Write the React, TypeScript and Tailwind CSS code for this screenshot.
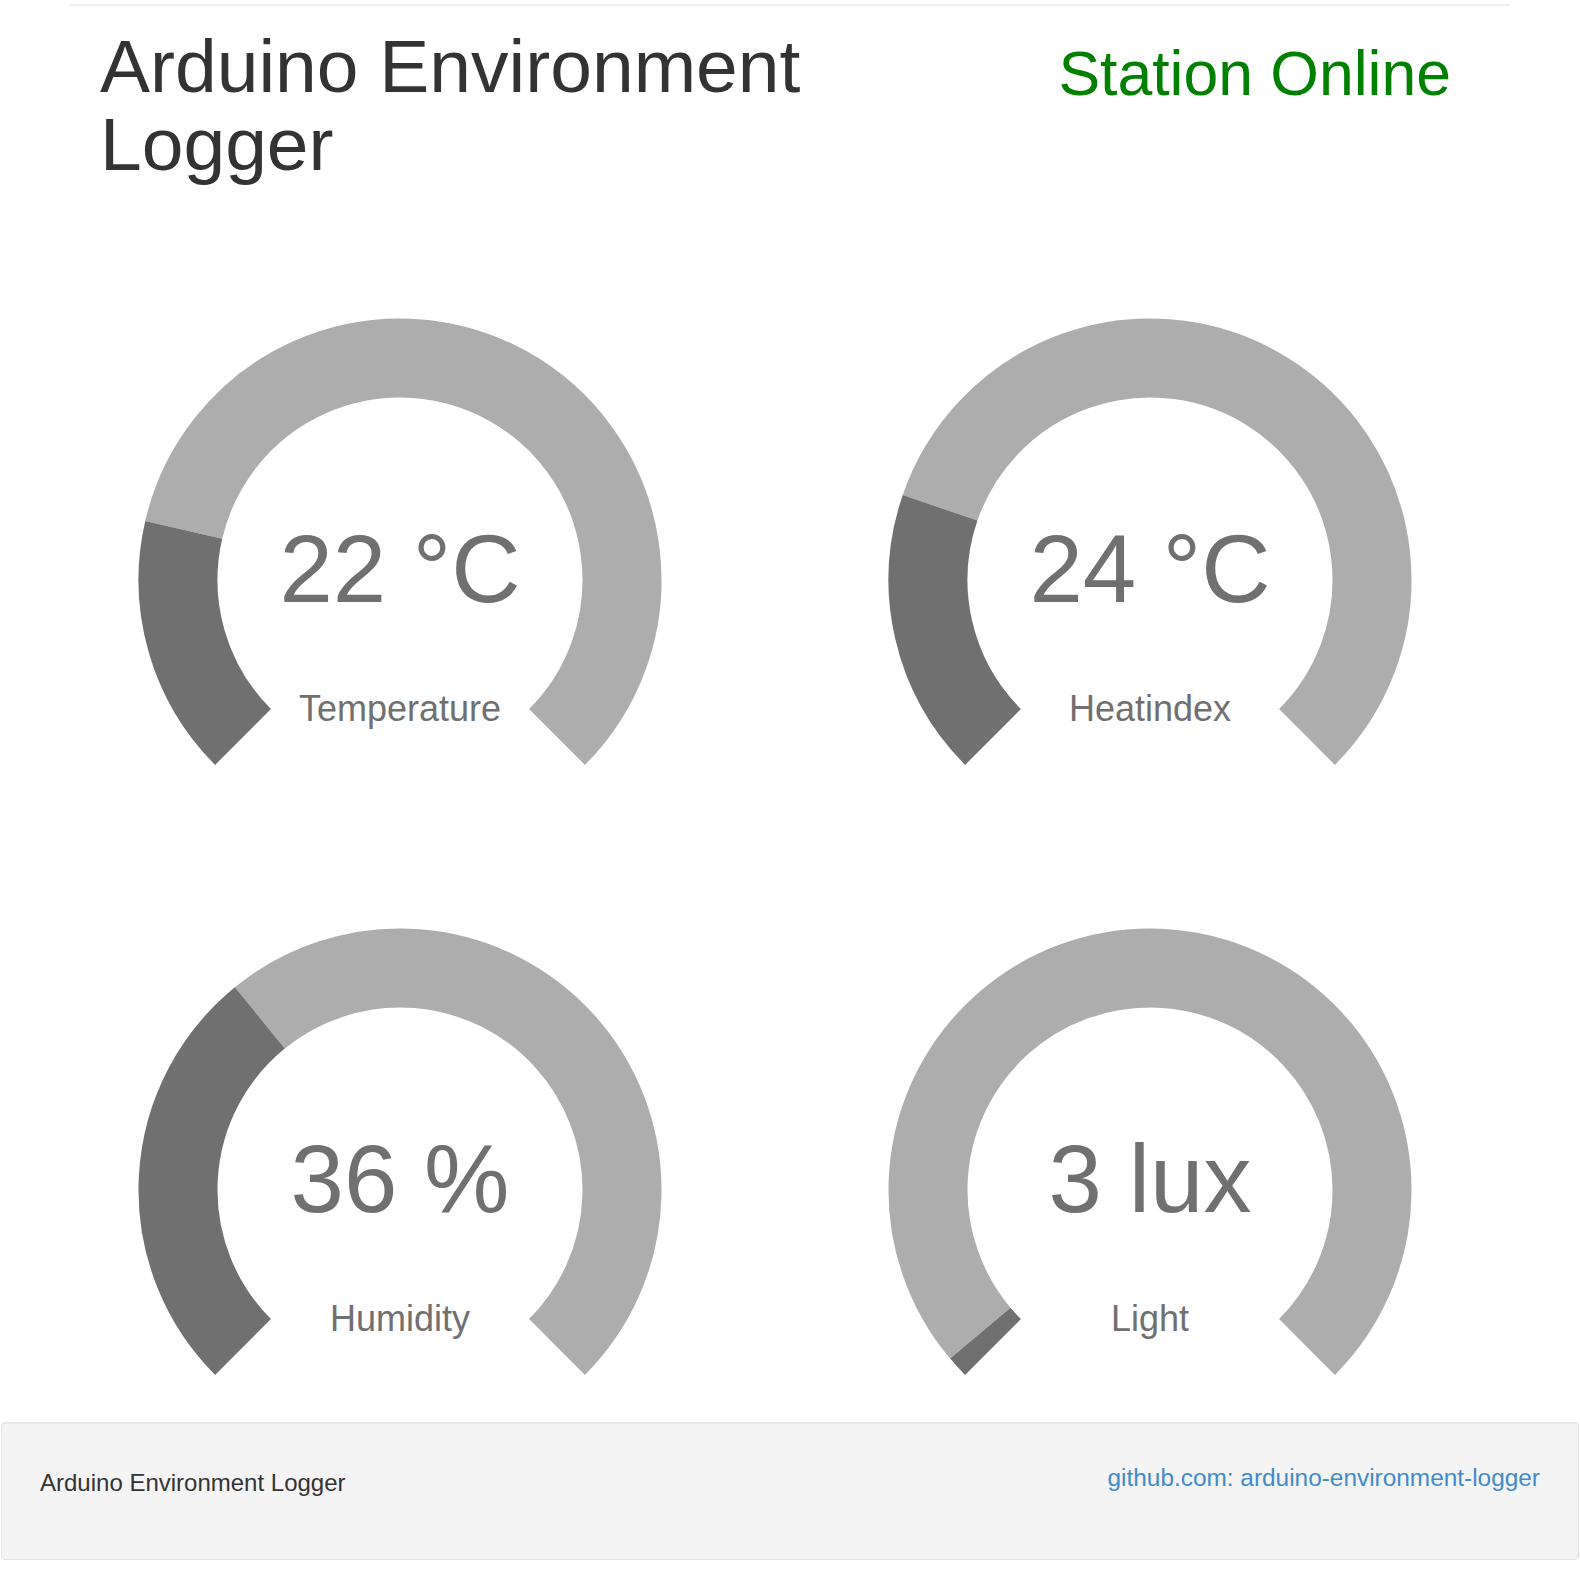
import React from "react";

type GaugeProps = {
  value: string;
  label: string;
  fraction: number;
};

const CX = 300;
const CY = 265;
const R = 222;
const THICK = 79;

function point(deg: number, r: number) {
  const rad = (deg * Math.PI) / 180;
  return [CX + r * Math.sin(rad), CY - r * Math.cos(rad)];
}

function arcPath(a0: number, a1: number) {
  const [x0, y0] = point(a0, R);
  const [x1, y1] = point(a1, R);
  const large = a1 - a0 > 180 ? 1 : 0;
  return `M ${x0} ${y0} A ${R} ${R} 0 ${large} 1 ${x1} ${y1}`;
}

function Gauge({ value, label, fraction }: GaugeProps) {
  const start = -135;
  const end = 135;
  const split = start + 270 * fraction;

  return (
    <svg width="600" height="450" viewBox="0 0 600 450" className="block">
      <path d={arcPath(split, end)} fill="none" stroke="#adadad" strokeWidth={THICK} />
      <path d={arcPath(start, split)} fill="none" stroke="#707070" strokeWidth={THICK} />
      <text
        x={CX}
        y={CY + 22}
        textAnchor="middle"
        fontSize="96"
        fill="#707070"
        fontFamily="'Liberation Sans', Arial, sans-serif"
      >
        {value}
      </text>
      <text
        x={CX}
        y={CY + 141}
        textAnchor="middle"
        fontSize="36"
        fill="#707070"
        fontFamily="'Liberation Sans', Arial, sans-serif"
      >
        {label}
      </text>
    </svg>
  );
}

const gauges: GaugeProps[] = [
  { value: "22 °C", label: "Temperature", fraction: 0.215 },
  { value: "24 °C", label: "Heatindex", fraction: 0.237 },
  { value: "36 %", label: "Humidity", fraction: 0.355 },
  { value: "3 lux", label: "Light", fraction: 0.018 },
];

export default function App() {
  return (
    <div className="min-h-[1580px] bg-white font-['Liberation_Sans',Arial,sans-serif]">
      <div className="mx-auto w-[1440px] pt-[4px]">
        <div className="border-t-2 border-[#eeeeee]" />
        <header className="flex justify-between pl-[30px] pr-[59px] pt-[21px]">
          <h1 className="w-[800px] text-[75px] font-normal leading-[78px] text-[#333333]">
            Arduino Environment Logger
          </h1>
          <div className="mt-[12px] text-[62.5px] leading-[68px] text-[#008000]">Station Online</div>
        </header>

        <div className="mt-[132px] grid grid-cols-[600px_600px] gap-x-[150px] gap-y-[160px] pl-[30px]">
          {gauges.map((g) => (
            <Gauge key={g.label} {...g} />
          ))}
        </div>
      </div>

      <footer className="mx-px mt-[47px] flex h-[138px] items-start justify-between rounded-[4px] border border-[#e3e3e3] bg-[#f4f4f4] px-[38px] pt-[38px] text-[24px] leading-[34px] shadow-[inset_0_1px_1px_rgba(0,0,0,0.05)]">
        <span className="mt-[5px] text-[#333333]">Arduino Environment Logger</span>
        <a href="#" className="text-[24.4px] text-[#428bca]">
          github.com: arduino-environment-logger
        </a>
      </footer>
    </div>
  );
}
